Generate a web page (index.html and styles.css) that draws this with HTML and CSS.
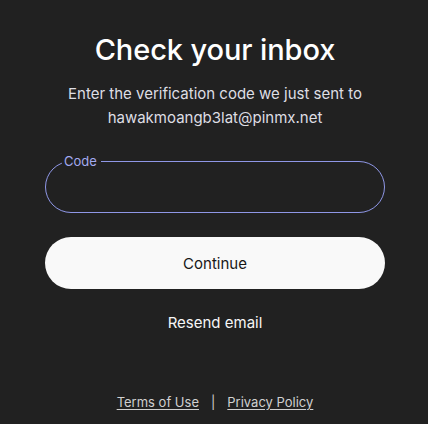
FILE: index.html
```html
<!DOCTYPE html>
<html lang="en">
<head>
<meta charset="utf-8">
<title>Check your inbox</title>
<link rel="stylesheet" href="styles.css">
</head>
<body>
<main class="page">
  <section class="card">
    <h1 class="title">Check your inbox</h1>
    <p class="lead">Enter the verification code we just sent to<br>hawakmoangb3lat@pinmx.net</p>
    <form class="form">
      <fieldset class="field">
        <legend class="field-label">Code</legend>
        <input class="field-input" type="text" inputmode="numeric" aria-label="Code">
      </fieldset>
      <button class="btn-primary" type="button">Continue</button>
      <button class="btn-link" type="button">Resend email</button>
    </form>
  </section>
  <footer class="footer">
    <a class="footer-link" href="#">Terms of Use</a>
    <span class="footer-sep">|</span>
    <a class="footer-link" href="#">Privacy Policy</a>
  </footer>
</main>
</body>
</html>
```

FILE: styles.css
```css
* { box-sizing: border-box; }

html, body {
  margin: 0;
  height: 100%;
  background: #212121;
}

body {
  font-family: Inter, "Liberation Sans", Arial, sans-serif;
  color: #ececec;
}

.page {
  display: flex;
  flex-direction: column;
  align-items: center;
  padding: 30px 0 0 2px;
  height: 424px;
}

.card {
  width: 340px;
  display: flex;
  flex-direction: column;
  align-items: center;
}

.title {
  margin: 0;
  font-size: 29px;
  font-weight: 500;
  line-height: 40px;
  color: #ffffff;
  letter-spacing: -0.1px;
}

.lead {
  margin: 12px 0 0;
  font-size: 15px;
  line-height: 24px;
  text-align: center;
  color: #dedee4;
}

.form {
  width: 100%;
  display: flex;
  flex-direction: column;
  align-items: center;
  margin-top: 25px;
}

.field {
  width: 100%;
  height: 58px;
  margin: 0;
  padding: 0 16px;
  border: 1px solid #8f97e6;
  border-radius: 26px;
}

.field-label {
  margin-left: 0;
  padding: 0 4px 0 2px;
  font-size: 13px;
  line-height: 12px;
  color: #a3aaf0;
}

.field-input {
  width: 100%;
  height: 40px;
  border: 0;
  background: transparent;
  outline: none;
  color: #fff;
  font: inherit;
  font-size: 15px;
}

.btn-primary {
  width: 100%;
  height: 52px;
  margin-top: 24px;
  border: 0;
  border-radius: 26px;
  background: #f9f9f9;
  color: #171717;
  font-family: inherit;
  font-size: 15px;
  cursor: pointer;
}

.btn-link {
  margin-top: 20px;
  border: 0;
  padding: 4px 8px;
  background: transparent;
  color: #f6f6f6;
  font-family: inherit;
  font-size: 15px;
  cursor: pointer;
}

.footer {
  margin-top: auto;
  margin-bottom: 14px;
  display: flex;
  align-items: center;
  gap: 12px;
  font-size: 13px;
  color: #d0d0d0;
}

.footer-link {
  color: #d0d0d0;
  text-decoration: underline;
  text-underline-offset: 2px;
}

.footer-sep {
  color: #d0d0d0;
}
```
